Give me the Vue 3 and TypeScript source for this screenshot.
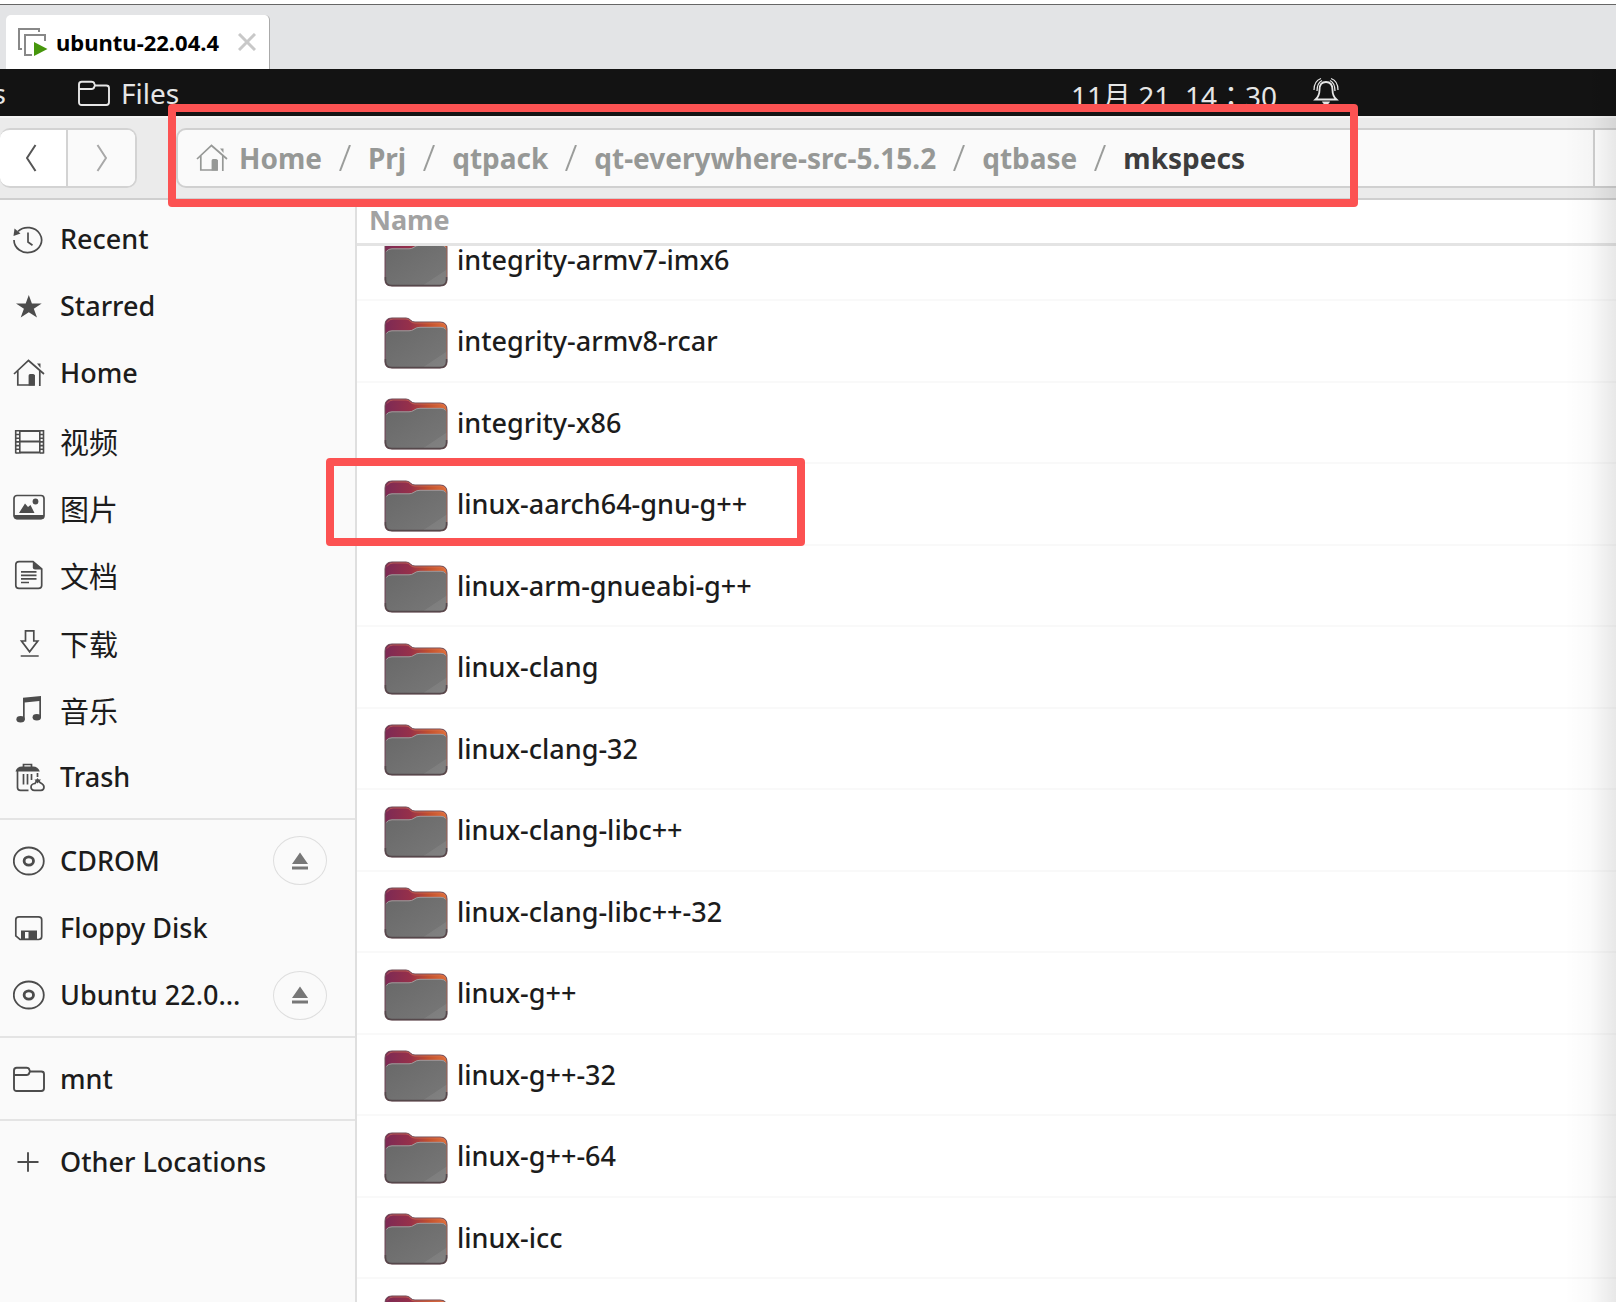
<script setup lang="ts">
interface Place {
  label: string
  icon: string
  cjk?: boolean
  eject?: boolean
}

const sections: Place[][] = [
  [
    { label: 'Recent', icon: 'recent' },
    { label: 'Starred', icon: 'star' },
    { label: 'Home', icon: 'home' },
    { label: '视频', icon: 'video', cjk: true },
    { label: '图片', icon: 'picture', cjk: true },
    { label: '文档', icon: 'document', cjk: true },
    { label: '下载', icon: 'download', cjk: true },
    { label: '音乐', icon: 'music', cjk: true },
    { label: 'Trash', icon: 'trash' },
  ],
  [
    { label: 'CDROM', icon: 'disc', eject: true },
    { label: 'Floppy Disk', icon: 'floppy' },
    { label: 'Ubuntu 22.0…', icon: 'disc', eject: true },
  ],
  [{ label: 'mnt', icon: 'folder' }],
  [{ label: 'Other Locations', icon: 'plus' }],
]

const crumbs: string[] = ['Home', 'Prj', 'qtpack', 'qt-everywhere-src-5.15.2', 'qtbase', 'mkspecs']

const folders: string[] = [
  'integrity-armv7-imx6',
  'integrity-armv8-rcar',
  'integrity-x86',
  'linux-aarch64-gnu-g++',
  'linux-arm-gnueabi-g++',
  'linux-clang',
  'linux-clang-32',
  'linux-clang-libc++',
  'linux-clang-libc++-32',
  'linux-g++',
  'linux-g++-32',
  'linux-g++-64',
  'linux-icc',
  '',
]
</script>

<template>
  <div class="window">
    <svg class="defs" width="0" height="0" aria-hidden="true">
      <defs>
        <linearGradient id="tab-colour" x1="0" y1="0" x2="1" y2="0">
          <stop offset="0" stop-color="#7c2a55" />
          <stop offset="0.4" stop-color="#96304a" />
          <stop offset="0.7" stop-color="#c2502f" />
          <stop offset="1" stop-color="#e0703a" />
        </linearGradient>
        <linearGradient id="front-colour" x1="0" y1="0" x2="1" y2="1">
          <stop offset="0" stop-color="#686868" />
          <stop offset="0.8" stop-color="#757575" />
          <stop offset="0.81" stop-color="#7e7e7e" />
          <stop offset="1" stop-color="#828282" />
        </linearGradient>
        <symbol id="home" viewBox="0 0 32 30">
          <path d="M1 16L15.500 2.500L31 16" fill="none" stroke="currentColor" stroke-width="1.700" />
          <path d="M4.800 13V27H21V17M26.800 13V28" fill="none" stroke="currentColor" stroke-width="1.700" />
          <path d="M15.600 17.500q0-1.500 1.500-1.500h3q1.700 0 1.700 1.500V27.500h-6.200zM24 5.500h3.500v4.500z" fill="currentColor" />
        </symbol>
        <symbol id="folder" viewBox="0 0 32 30">
          <path d="M1 10V6.500Q1 3.800 3.700 3.800H13.500Q16 3.800 16.500 6L17 7.500H28.300Q31 7.500 31 10V24.300Q31 27 28.300 27H3.700Q1 27 1 24.300ZM1 11H13.500Q15.800 11 16.200 9L17 7.500" fill="none" stroke="currentColor" stroke-width="1.900" />
        </symbol>
      </defs>
    </svg>

    <header class="tabs">
      <div class="tab">
        <svg class="vm" viewBox="0 0 30 28" aria-hidden="true">
          <path d="M4 21H1V1H21V4" fill="none" stroke="#888" stroke-width="2" />
          <path d="M14 27H7V7H27V13" fill="none" stroke="#888" stroke-width="2" />
          <path d="M16 14L29.500 21L16 28Z" fill="#46960c" />
        </svg>
        <span>ubuntu-22.04.4</span>
        <button class="close" aria-label="Close tab">
          <svg viewBox="0 0 18 18"><path d="M1 1L17 17M17 1L1 17" stroke="#c8c8c8" stroke-width="3" /></svg>
        </button>
      </div>
    </header>

    <div class="panel">
      <span class="activities">s</span>
      <button class="app">
        <svg viewBox="0 0 32 30" aria-hidden="true"><use href="#folder" /></svg>
        Files
      </button>
      <button class="clock">
        <span>11月 21&nbsp; 14：30</span>
        <svg viewBox="0 0 26 28" aria-hidden="true">
          <path d="M2.500 22.500Q6.500 19 6.500 13Q6.500 5 13 5Q19.500 5 19.500 13Q19.500 19 23.500 22.500Z" fill="none" stroke="currentColor" stroke-width="1.800" />
          <path d="M1 13Q1 4 8 1.500M25 13Q25 4 18 1.500M4 14Q4 6 9 3.500M22 14Q22 6 17 3.500" fill="none" stroke="currentColor" stroke-width="1.300" />
          <path d="M9 24.500h8q-1 3-4 3t-4-3z" fill="currentColor" />
        </svg>
      </button>
    </div>

    <div class="toolbar">
      <div class="history">
        <button class="back" aria-label="Back">
          <svg viewBox="0 0 12 28"><path d="M10.500 1L2 14L10.500 27" fill="none" stroke="#555" stroke-width="2" /></svg>
        </button>
        <button class="forward" aria-label="Forward">
          <svg viewBox="0 0 12 28"><path d="M1.500 1L10 14L1.500 27" fill="none" stroke="#a8a8a8" stroke-width="2" /></svg>
        </button>
      </div>
      <nav class="path" aria-label="Location">
        <template v-for="(crumb, i) in crumbs" :key="crumb">
          <svg v-if="i > 0" class="slash" viewBox="0 0 12 26" aria-hidden="true">
            <path d="M11 0L1 26" stroke="#9a9c9a" stroke-width="2" />
          </svg>
          <button :class="{ current: i === crumbs.length - 1 }">
            <svg v-if="i === 0" viewBox="0 0 32 30" aria-hidden="true"><use href="#home" /></svg>
            {{ crumb }}
          </button>
        </template>
      </nav>
      <button class="search" aria-label="Search"></button>
    </div>

    <main>
      <aside>
        <ul v-for="(places, s) in sections" :key="s">
          <li v-for="place in places" :key="place.label" :class="{ cjk: place.cjk }">
            <a href="#">
              <svg viewBox="0 0 32 30" aria-hidden="true">
                <g v-if="place.icon === 'recent'" fill="none" stroke="currentColor" stroke-width="1.700">
                  <path d="M1 16A13.800 12.500 0 1 0 5 7.300M15 8.500V18L19.500 21.200" />
                  <path d="M1.500 4.500L7.500 9.500L0.500 12Z" fill="currentColor" stroke="none" />
                </g>
                <path v-else-if="place.icon === 'star'" d="M15.800 4L18.900 12.500H28.700L20.800 17.800L24 26.500L15.800 21.300L7.700 26.500L10.900 17.800L3 12.500H12.700Z" fill="currentColor" />
                <use v-else-if="place.icon === 'home'" href="#home" />
                <g v-else-if="place.icon === 'video'" fill="none" stroke="currentColor">
                  <path d="M7 5H26M7 15.500H26M7 26.500H26" stroke-width="1.800" />
                  <path d="M2.700 4V27.500M6.800 4V27.500M26.800 4V27.500M30.500 4V27.500" stroke-width="1.600" />
                  <path d="M4.700 4V28M28.700 4V28" stroke-width="3.500" stroke-dasharray="1.600 2.100" />
                </g>
                <g v-else-if="place.icon === 'picture'">
                  <rect x="1" y="2.500" width="30" height="23" rx="3" fill="none" stroke="currentColor" stroke-width="1.700" />
                  <path d="M1 22H31V23.500Q31 26.500 28 26.500H4Q1 26.500 1 23.500ZM6 20L12 10.500L15 14L17.500 12L21.500 20Z" fill="currentColor" />
                  <circle cx="22.500" cy="8.500" r="2.900" fill="currentColor" />
                </g>
                <g v-else-if="place.icon === 'document'">
                  <path d="M20 1.600H6Q2.800 1.600 2.800 4.500V25.500Q2.800 28.300 6 28.300H25.500Q28.700 28.300 28.700 25.500V9Z" fill="none" stroke="currentColor" stroke-width="1.700" />
                  <path d="M19.800 1L29.300 9.500H22Q19.800 9.500 19.800 7.500Z" fill="currentColor" />
                  <path d="M8 11.800H23.500M8 15.300H23.500M8 18.800H23.500M8 22.500H16" stroke="currentColor" stroke-width="1.700" />
                </g>
                <g v-else-if="place.icon === 'download'" fill="none" stroke="currentColor" stroke-width="1.700">
                  <path d="M12.500 2.800H20.800V13H24.800L16.600 23.800L8.500 13H12.500ZM7.700 28H25.700" />
                </g>
                <g v-else-if="place.icon === 'music'" fill="currentColor">
                  <path d="M10 2.800L28 1V22.500H26.300V6L11.700 7.500V24.500H10Z" />
                  <ellipse cx="7.600" cy="24.300" rx="4.200" ry="3.300" />
                  <ellipse cx="23.800" cy="22.300" rx="4.200" ry="3.300" />
                </g>
                <g v-else-if="place.icon === 'trash'" fill="none" stroke="currentColor" stroke-width="1.700">
                  <path d="M10.500 5V2.500H18.500V5" />
                  <path d="M2.500 9.500Q4 4.500 9 4.500H20Q25 4.500 26.800 9.500Z" fill="currentColor" stroke="none" />
                  <path d="M4.500 9V25.500Q4.500 28.300 7.500 28.300H15.500M24.500 11V15M10.500 12V22.500M14.500 12V22.500M18.500 12V18" />
                  <path d="M24.500 17.500L27 20.500Q31 22.500 31 25Q31 28.300 28 28.300H21.500Q18 28.300 18 25Q18 22 22 21.500Z" />
                  <path d="M21.500 17.500H28L24.500 21.500Z" fill="currentColor" stroke="none" />
                </g>
                <g v-else-if="place.icon === 'disc'" fill="none" stroke="currentColor">
                  <ellipse cx="15.800" cy="15" rx="15" ry="13.500" stroke-width="1.800" />
                  <ellipse cx="15.800" cy="15" rx="4.700" ry="4.200" stroke-width="2.800" />
                </g>
                <g v-else-if="place.icon === 'floppy'">
                  <path d="M6 3.800H25.500Q28.700 3.800 28.700 6.700V23.500Q28.700 26.500 25.500 26.500H7L2.800 22.800V6.700Q2.800 3.800 6 3.800Z" fill="none" stroke="currentColor" stroke-width="1.700" />
                  <path d="M8 17.500H24V27H8ZM12 19V25.500H15.500V19Z" fill="currentColor" fill-rule="evenodd" />
                </g>
                <use v-else-if="place.icon === 'folder'" href="#folder" />
                <path v-else d="M4.500 15H25.500M15 5.200V24.800" stroke="currentColor" stroke-width="1.900" />
              </svg>
              {{ place.label }}
            </a>
            <button v-if="place.eject" class="eject" :aria-label="'Eject ' + place.label">
              <svg viewBox="0 0 16 18"><path d="M8 0.500L16 12H0ZM0 14.500H16V17.500H0Z" fill="#777" /></svg>
            </button>
          </li>
        </ul>
      </aside>

      <section>
        <button class="column">Name</button>
        <div class="view">
          <ul class="files">
            <li v-for="name in folders" :key="name">
              <svg viewBox="0 0 64 52" aria-hidden="true">
                <path d="M1 8Q1 1 8 1H22Q25 1 27 3.500Q28.500 5 31 5H56Q63 5 63 12V45Q63 51 56 51H8Q1 51 1 45Z" fill="url(#tab-colour)" stroke="#6d4a55" stroke-width="1" />
                <path d="M3 5.500Q5 2 9 2H22Q24.500 2 26 4Q28 6 31 6H56Q60 6 61.500 9" fill="none" stroke="#e07a5a" stroke-opacity="0.550" />
                <path d="M1.500 17Q3 13.500 8 13.500H25Q28 13.500 30 12Q32.500 10 36 10H57Q61.500 10 62.500 14V44.500Q62.500 50.500 56 50.500H8Q1.500 50.500 1.500 44.500Z" fill="url(#front-colour)" />
                <path d="M2.500 16.500Q4 13.800 8 13.800H25Q28 13.800 30 12.200Q32.500 10.300 36 10.300H57Q60.500 10.300 61.500 12.500" fill="none" stroke="#a3989a" />
                <path d="M1.500 42V44.500Q1.500 50.500 8 50.500H56Q62.500 50.500 62.500 44.500V42" fill="none" stroke="#55484b" stroke-width="1.500" />
              </svg>
              <span>{{ name }}</span>
            </li>
          </ul>
        </div>
      </section>
    </main>

    <div class="shade"></div>
    <div class="mark mark-path"></div>
    <div class="mark mark-folder"></div>
  </div>
</template>

<style>
body {
  margin: 0;
}
</style>

<style scoped>
.window {
  position: relative;
  display: flex;
  flex-direction: column;
  height: 100vh;
  overflow: hidden;
  background: #fff;
  color: #1c1c1c;
  font: 500 27px/32px "Noto Sans", "Noto Sans CJK SC", sans-serif;
}
.defs {
  position: absolute;
}
button {
  margin: 0;
  padding: 0;
  border: 0;
  background: none;
  color: inherit;
  font: inherit;
}
ul {
  margin: 0;
  padding: 0;
  list-style: none;
}
svg {
  flex: none;
  display: block;
}

.tabs {
  display: flex;
  flex: none;
  height: 54px;
  margin-top: 4px;
  padding: 10px 6px 0;
  border-top: 1px solid #666;
  background: #e3e4e6;
}
.tab {
  display: flex;
  align-items: center;
  box-sizing: border-box;
  width: 264px;
  padding-left: 12px;
  border-right: 1px solid #aaa;
  border-radius: 5px 5px 0 0;
  background: #fff;
  color: #000;
  font: bold 22px/32px "Noto Sans", sans-serif;
}
.vm {
  width: 30px;
  height: 28px;
  margin-right: 8px;
}
.close {
  margin-left: auto;
  margin-right: 13px;
}
.close svg {
  width: 18px;
  height: 18px;
}

.panel {
  display: flex;
  flex: none;
  align-items: center;
  height: 47px;
  border-bottom: 2px solid #f4f4f4;
  background: #131313;
  color: #e6e6e6;
  font-size: 28px;
  font-weight: 400;
}
.activities {
  display: flex;
  justify-content: flex-end;
  width: 6px;
  overflow: hidden;
}
.app {
  display: flex;
  align-items: center;
  gap: 11px;
  margin-left: 72px;
}
.app svg {
  width: 32px;
  height: 30px;
}
.clock {
  display: flex;
  align-items: flex-end;
  gap: 36px;
  margin-left: auto;
  margin-right: 277px;
  font-family: "Noto Sans", "Noto Sans CJK TC", sans-serif;
}
.clock svg {
  width: 26px;
  height: 28px;
  margin-bottom: 7px;
}
.clock span {
  padding-top: 6px;
}

.toolbar {
  display: flex;
  flex: none;
  align-items: center;
  height: 80px;
  border-bottom: 2px solid #cfcfcf;
  background: #ebebeb;
}
.history {
  display: flex;
  box-sizing: border-box;
  width: 137px;
  height: 60px;
  border: 2px solid #d3d3d3;
  border-left: 0;
  border-radius: 10px;
  background: #fff;
  overflow: hidden;
}
.history button {
  display: flex;
  align-items: center;
  justify-content: center;
}
.back {
  flex: none;
  box-sizing: border-box;
  width: 66px;
  padding-right: 4px;
}
.forward {
  flex: 1;
  border-left: 2px solid #d3d3d3;
  background: #fafafa;
}
.history svg {
  width: 12px;
  height: 28px;
}
.path {
  display: flex;
  flex: 1;
  align-items: center;
  gap: 17px;
  box-sizing: border-box;
  height: 60px;
  margin-left: 39px;
  padding-left: 18px;
  border: 2px solid #d0d0d0;
  border-radius: 10px 0 0 10px;
  background: #fafafa;
  color: #969896;
  font-size: 28px;
  font-weight: 700;
}
.path button {
  display: flex;
  align-items: center;
  gap: 11px;
}
.path button svg {
  width: 32px;
  height: 30px;
}
.path .current {
  color: #3d3d3d;
}
.slash {
  width: 12px;
  height: 26px;
}
.search {
  box-sizing: border-box;
  width: 21px;
  height: 60px;
  border: solid #d0d0d0;
  border-width: 2px 0;
  background: #fff;
}

main {
  display: flex;
  flex: 1;
  min-height: 0;
}
aside {
  flex: none;
  width: 355px;
  border-right: 2px solid #dfdfdf;
  background: #fafafa;
}
aside ul {
  padding: 7px 0;
}
aside ul:first-child {
  padding-top: 5px;
}
aside ul + ul {
  border-top: 2px solid #e4e4e4;
}
aside li {
  display: flex;
  align-items: center;
  justify-content: space-between;
  height: 67px;
  padding: 0 28px 0 13px;
}
aside li:nth-child(3n) {
  height: 68px;
}
aside a {
  display: flex;
  align-items: center;
  gap: 15px;
  color: #1c1c1c;
  text-decoration: none;
}
aside a svg {
  width: 32px;
  height: 30px;
  color: #4c4c4c;
}
.cjk a {
  font: 29px/36px "Noto Sans CJK SC", sans-serif;
}
.eject {
  display: flex;
  align-items: center;
  justify-content: center;
  box-sizing: border-box;
  width: 54px;
  height: 49px;
  border: 1px solid #dedede;
  border-radius: 50%;
}
.eject svg {
  width: 16px;
  height: 18px;
}

section {
  display: flex;
  flex: 1;
  flex-direction: column;
  min-width: 0;
}
.column {
  flex: none;
  height: 46px;
  padding: 0 0 4px 12px;
  border-bottom: 3px solid #e4e4e4;
  color: #a2a2a2;
  font-weight: 700;
  text-align: left;
}
.view {
  flex: 1;
  min-height: 0;
  overflow: hidden;
}
.files {
  margin-top: -26px;
}
.files li {
  display: flex;
  align-items: center;
  gap: 9px;
  box-sizing: border-box;
  height: 81px;
  padding-left: 27px;
  border-bottom: 2px solid #f9f9f9;
}
.files li:nth-child(even) {
  height: 82px;
}
.files svg {
  width: 64px;
  height: 52px;
  margin-top: 3px;
}

.shade {
  position: absolute;
  top: 69px;
  right: 0;
  bottom: 0;
  width: 52px;
  background: linear-gradient(to right, transparent, rgba(0, 0, 0, 0.02) 50%, rgba(0, 0, 0, 0.09));
  pointer-events: none;
}
.mark {
  position: absolute;
  box-sizing: border-box;
  border: 8px solid #fc5252;
  border-radius: 4px;
  pointer-events: none;
}
.mark-path {
  top: 104px;
  left: 168px;
  width: 1190px;
  height: 103px;
}
.mark-folder {
  top: 458px;
  left: 326px;
  width: 479px;
  height: 88px;
}
</style>
